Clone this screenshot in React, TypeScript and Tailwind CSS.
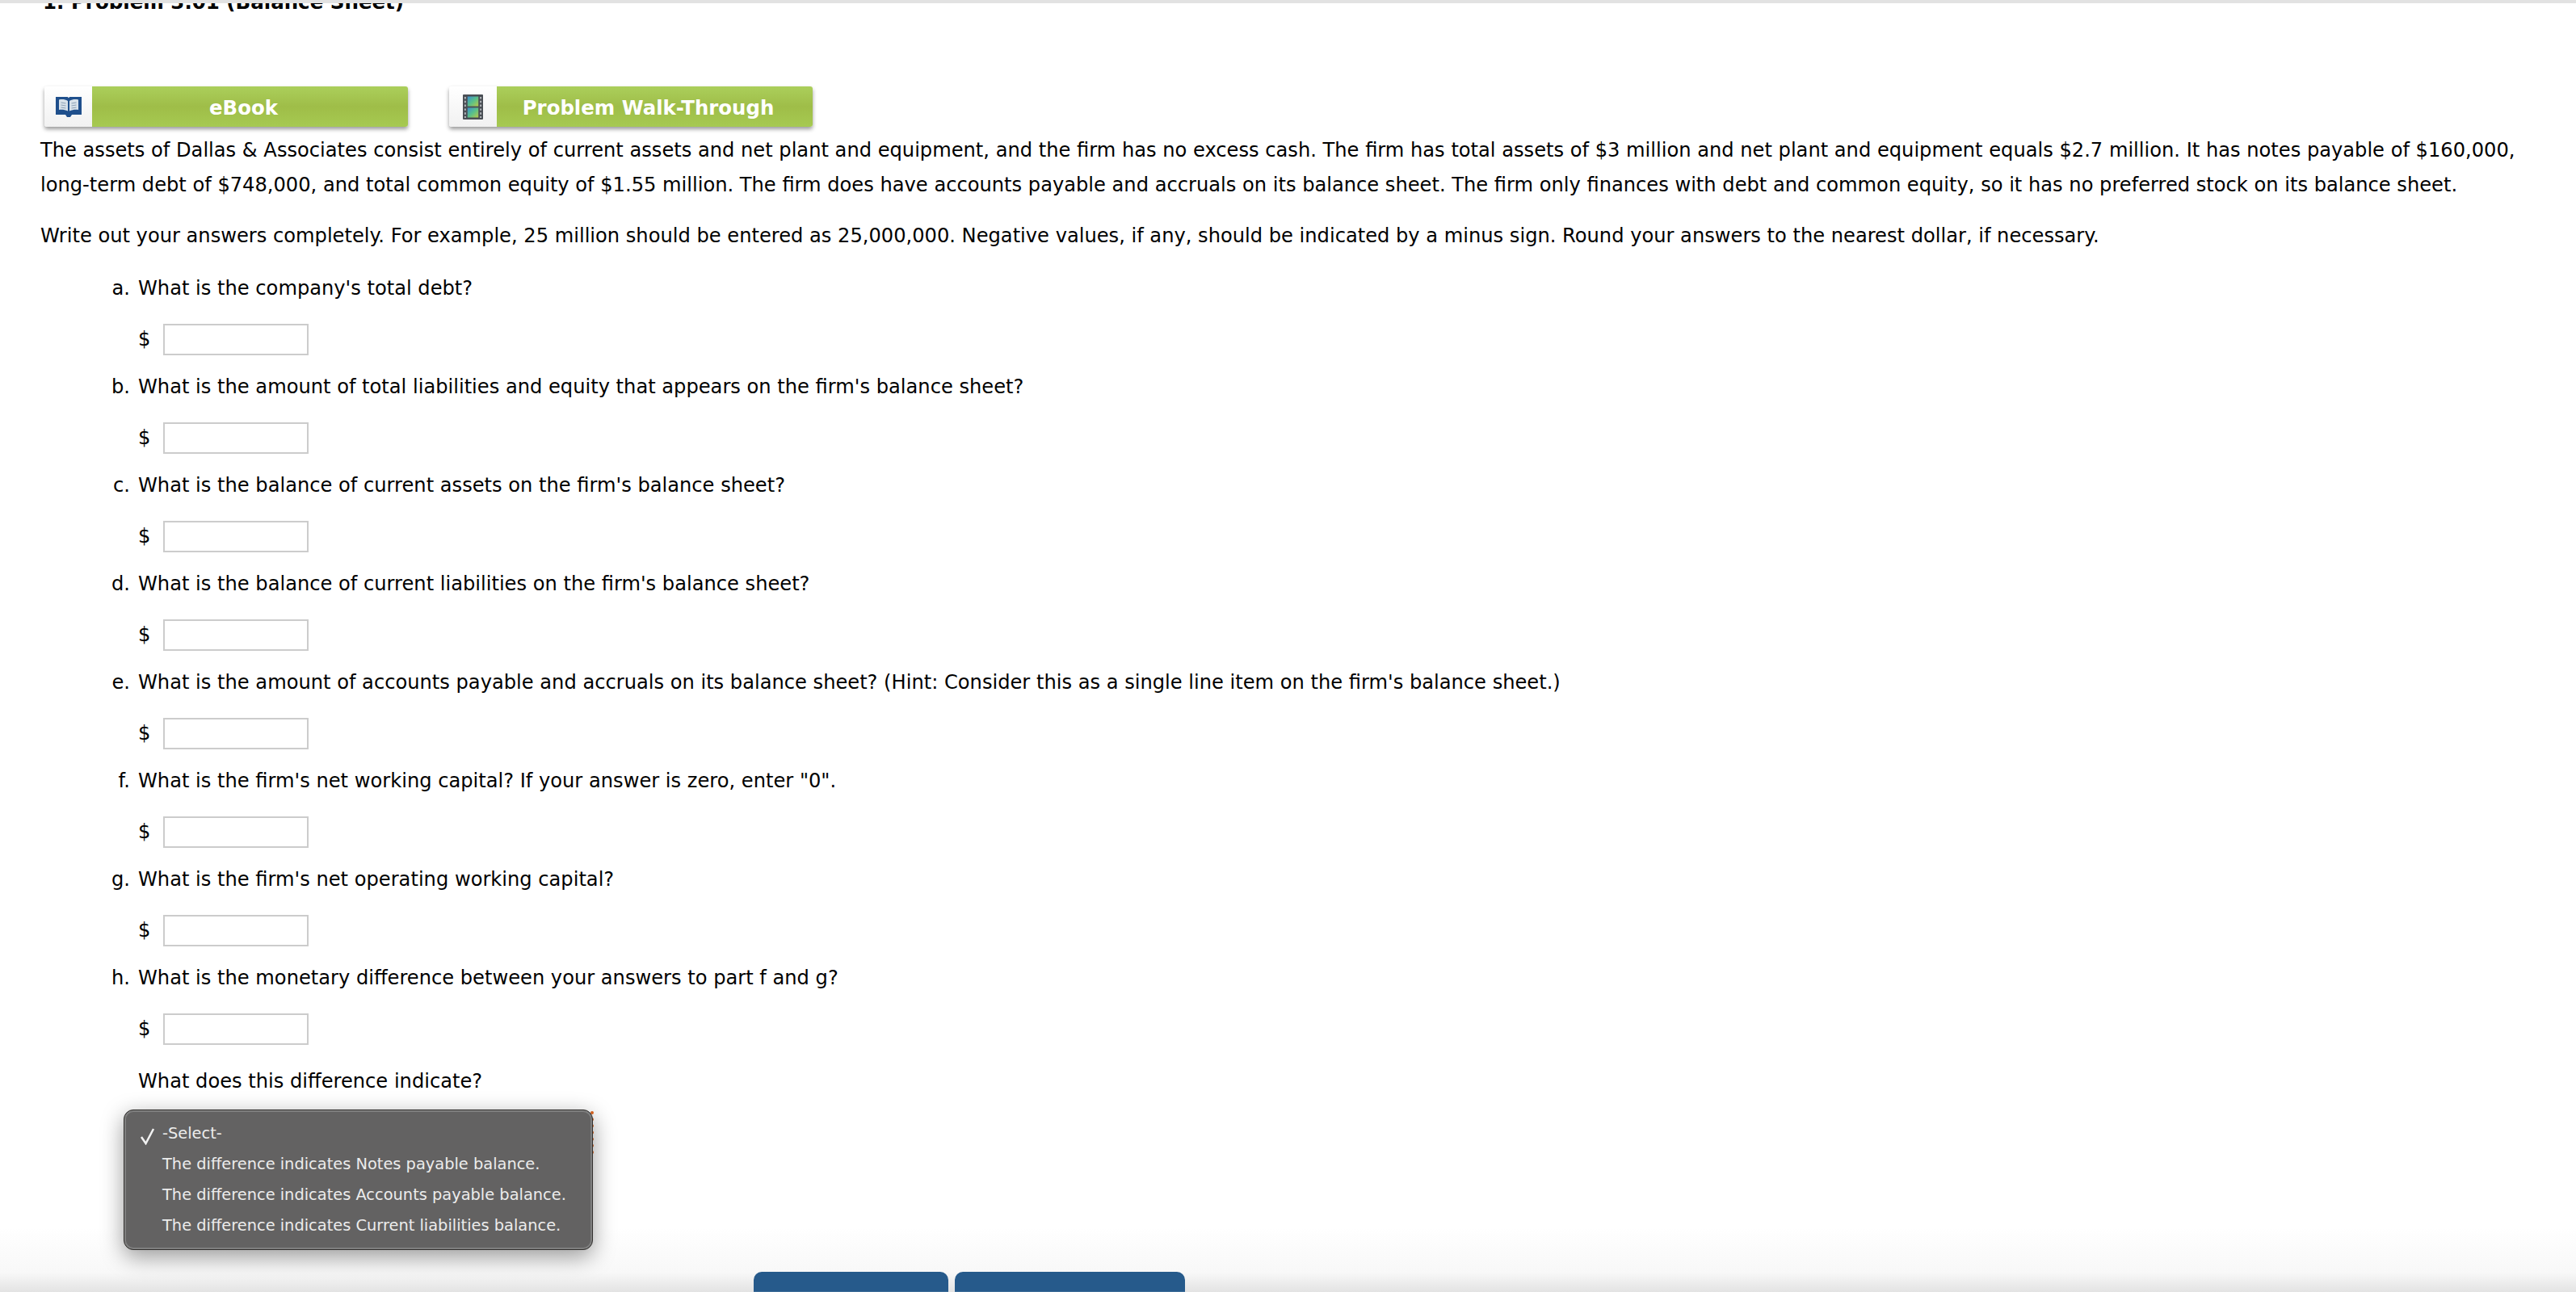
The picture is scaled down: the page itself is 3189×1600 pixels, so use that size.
import React from 'react';

const questions = [
  { mark: 'a.', text: "What is the company's total debt?" },
  { mark: 'b.', text: "What is the amount of total liabilities and equity that appears on the firm's balance sheet?" },
  { mark: 'c.', text: "What is the balance of current assets on the firm's balance sheet?" },
  { mark: 'd.', text: "What is the balance of current liabilities on the firm's balance sheet?" },
  { mark: 'e.', text: "What is the amount of accounts payable and accruals on its balance sheet? (Hint: Consider this as a single line item on the firm's balance sheet.)" },
  { mark: 'f.', text: 'What is the firm\'s net working capital? If your answer is zero, enter "0".' },
  { mark: 'g.', text: "What is the firm's net operating working capital?" },
  { mark: 'h.', text: 'What is the monetary difference between your answers to part f and g?' },
];

const options = [
  '-Select-',
  'The difference indicates Notes payable balance.',
  'The difference indicates Accounts payable balance.',
  'The difference indicates Current liabilities balance.',
];

const BookIcon = () => (
  <svg className="blur-[0.5px]" width="32" height="27" viewBox="0 0 32 27">
    <path d="M0 1h14c1 0 1.500.5 2 1.500.5-1 1-1.500 2-1.500h14v22H20l-2 3h-4l-2-3H0z" fill="#1f4f8c" />
    <path d="M4 4.500c4-1 7.500-.5 11 1.500v12.500c-3.500-1.500-7-2-11-1.500zM28 4.500c-4-1-7.500-.5-11 1.500v12.500c3.500-1.500 7-2 11-1.500z" fill="#d9e2ea" />
    <path d="M6.500 8l6 1M6.500 11l6 1M6.500 14l6 1M25.500 8l-6 1M25.500 11l-6 1M25.500 14l-6 1" stroke="#8ea2b5" strokeWidth="1.200" />
  </svg>
);

const FilmIcon = () => (
  <svg className="blur-[0.5px]" width="25" height="31" viewBox="0 0 26 32">
    <defs>
      <linearGradient id="frame" x1="0" y1="0" x2="1" y2="1">
        <stop offset="0" stopColor="#3f8fd0" />
        <stop offset="0.5" stopColor="#58c08a" />
        <stop offset="1" stopColor="#b8c94a" />
      </linearGradient>
    </defs>
    <rect x="0" y="0" width="26" height="32" rx="1" fill="#4a4f55" />
    <rect x="6" y="2.500" width="14" height="12.500" fill="url(#frame)" />
    <rect x="6" y="17" width="14" height="12.500" fill="url(#frame)" />
    <path d="M2 3h2v2.500H2zM2 8h2v2.500H2zM2 13h2v2.500H2zM2 18h2v2.500H2zM2 23h2v2.500H2zM2 28h2v2H2zM22 3h2v2.500h-2zM22 8h2v2.500h-2zM22 13h2v2.500h-2zM22 18h2v2.500h-2zM22 23h2v2.500h-2zM22 28h2v2h-2z" fill="#b4b8bd" />
  </svg>
);

const ResourceButton = ({ icon, label }: { icon: React.ReactNode; label: string }) => (
  <div className="flex h-[50px] w-[450px] rounded-[3px] shadow-[0_3px_5px_rgba(0,0,0,0.4)]">
    <div className="flex w-[59px] shrink-0 items-center justify-center rounded-l-[3px] bg-gradient-to-b from-white to-[#f1f1f1]">
      {icon}
    </div>
    <div className="flex flex-1 items-center justify-center rounded-r-[3px] bg-gradient-to-b from-[#abcf5b] via-[#9fbd48] to-[#a6ca51] pr-4 pt-[2px] text-[24.400px] font-bold text-white">
      {label}
    </div>
  </div>
);

export default function App() {
  return (
    <div className="relative h-[1600px] w-full overflow-hidden bg-white font-['DejaVu_Sans',sans-serif] text-[24.150px] leading-[43px] text-black">
      <div className="relative z-10 h-1 bg-[#e2e2e2]" />
      <div className="-mt-[19px] pl-[53px] text-[24.500px] font-bold leading-[36px]">1. Problem 3.01 (Balance Sheet)</div>

      <div className="mt-[86px] flex gap-[51px] pl-[55px]">
        <ResourceButton icon={<BookIcon />} label="eBook" />
        <ResourceButton icon={<FilmIcon />} label="Problem Walk-Through" />
      </div>

      <div className="mt-2 pl-[50px]">
        <p>
          The assets of Dallas &amp; Associates consist entirely of current assets and net plant and equipment, and the firm has no excess cash. The firm has total assets of $3 million and net plant and equipment equals $2.7 million. It has notes payable of $160,000,
          <br />
          long-term debt of $748,000, and total common equity of $1.55 million. The firm does have accounts payable and accruals on its balance sheet. The firm only finances with debt and common equity, so it has no preferred stock on its balance sheet.
        </p>
        <p className="mt-5">
          Write out your answers completely. For example, 25 million should be entered as 25,000,000. Negative values, if any, should be indicated by a minus sign. Round your answers to the nearest dollar, if necessary.
        </p>
      </div>

      <div className="mt-[22px]">
        {questions.map((q) => (
          <div key={q.mark} className="h-[122px]">
            <div className="flex">
              <span className="w-[162px] shrink-0 pr-[1px] text-right">{q.mark}</span>
              <span className="pl-[9px]">{q.text}</span>
            </div>
            <div className="mt-5 flex items-center pl-[171px]">
              <span className="w-[31px]">$</span>
              <div className="h-[39px] w-[180px] border-2 border-[#cccccc] bg-white" />
            </div>
          </div>
        ))}
        <div className="mt-[6px] pl-[171px]">What does this difference indicate?</div>
      </div>

      <div className="absolute bottom-0 left-0 right-0 flex h-[80px] justify-start bg-gradient-to-b from-white via-[#f8f8f8] via-70% to-[#e3e3e3] pl-[933px]">
        <div className="mt-[55px] flex gap-2">
          <div className="h-[25px] w-[241px] rounded-t-[10px] border-b border-[#3f6d99] bg-[#265a8b]" />
          <div className="h-[25px] w-[285px] rounded-t-[10px] border-b border-[#3f6d99] bg-[#265a8b]" />
        </div>
      </div>

      <div className="absolute left-[731px] top-[1376px] h-[53px] border-r-4 border-dotted border-[#e2661e]" />
      <div className="absolute left-[153px] top-[1374px] flex h-[174px] w-[581px] flex-col justify-center rounded-[12px] border border-[#33312f] bg-[#636262] font-['DejaVu_Sans',sans-serif] text-[19.400px] leading-[38px] text-[#ececec] shadow-[0_8px_28px_rgba(0,0,0,0.4),inset_0_0_0_2px_#7f7f7f]">
        {options.map((option, i) => (
          <div key={option} className="relative pl-[47px]">
            {i === 0 && (
              <svg className="absolute left-[19px] top-[11px]" width="20" height="22" viewBox="0 0 20 22">
                <path d="M2 12l5.500 8L17 2" fill="none" stroke="#f2f2f2" strokeWidth="2.500" />
              </svg>
            )}
            {option}
          </div>
        ))}
      </div>
    </div>
  );
}
